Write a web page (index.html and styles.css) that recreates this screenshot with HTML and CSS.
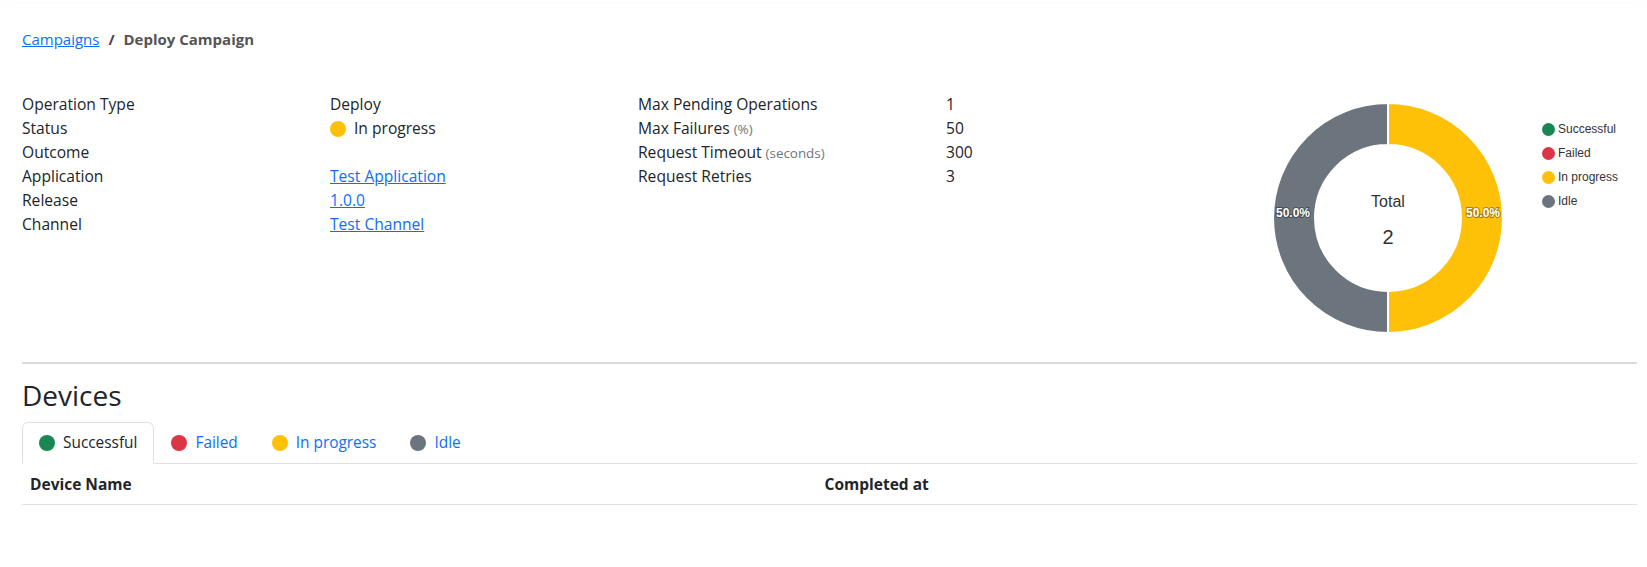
FILE: index.html
```html
<!DOCTYPE html>
<html>
<head>
  <title>Deploy Campaign</title>
  <link rel="stylesheet" href="styles.css">
</head>
<body>
  <div class="top-shadow"></div>

  <div class="content">
    <div class="breadcrumb">
      <a href="#">Campaigns</a>
      <span class="sep">/</span>
      <span class="current">Deploy Campaign</span>
    </div>

    <div class="overview">
      <table class="info">
        <tr><td class="label">Operation Type</td><td>Deploy</td></tr>
        <tr><td class="label">Status</td><td><span class="dot yellow"></span>In progress</td></tr>
        <tr><td class="label">Outcome</td><td></td></tr>
        <tr><td class="label">Application</td><td><a href="#">Test Application</a></td></tr>
        <tr><td class="label">Release</td><td><a href="#">1.0.0</a></td></tr>
        <tr><td class="label">Channel</td><td><a href="#">Test Channel</a></td></tr>
      </table>

      <table class="info">
        <tr><td class="label">Max Pending Operations</td><td>1</td></tr>
        <tr><td class="label">Max Failures <small>(%)</small></td><td>50</td></tr>
        <tr><td class="label">Request Timeout <small>(seconds)</small></td><td>300</td></tr>
        <tr><td class="label">Request Retries</td><td>3</td></tr>
      </table>

      <div class="chart">
        <svg class="donut" width="230" height="230" viewBox="0 0 230 230">
          <path d="M115 0 A115 115 0 0 1 115 230 L115 188 A73 73 0 0 0 115 42 Z" fill="#ffc107" stroke="#fff" stroke-width="2"/>
          <path d="M115 230 A115 115 0 0 1 115 0 L115 42 A73 73 0 0 0 115 188 Z" fill="#6c757d" stroke="#fff" stroke-width="2"/>
          <text class="pct" x="210" y="114">50.0%</text>
          <text class="pct" x="20" y="114">50.0%</text>
          <text class="total" x="115" y="104">Total</text>
          <text class="count" x="115" y="141">2</text>
        </svg>
        <ul class="legend">
          <li><span class="ldot green"></span>Successful</li>
          <li><span class="ldot red"></span>Failed</li>
          <li><span class="ldot yellow"></span>In progress</li>
          <li><span class="ldot gray"></span>Idle</li>
        </ul>
      </div>
    </div>

    <hr>

    <h2>Devices</h2>

    <ul class="tabs">
      <li class="active"><span class="dot green"></span>Successful</li>
      <li><span class="dot red"></span>Failed</li>
      <li><span class="dot yellow"></span>In progress</li>
      <li><span class="dot gray"></span>Idle</li>
    </ul>

    <table class="devices">
      <tr><th class="name">Device Name</th><th>Completed at</th></tr>
    </table>
  </div>
</body>
</html>
```

FILE: styles.css
```css
body {
  margin: 0;
  font-family: "Open Sans", sans-serif;
  color: #212529;
  background: #fff;
}

a {
  color: #0d6efd;
}

.top-shadow {
  height: 1px;
  box-shadow: 0 0 14px rgba(0, 0, 0, 0.14);
}

.content {
  padding: 26px 10px 0 22px;
}

.breadcrumb {
  font-size: 15px;
  line-height: 24px;
}

.breadcrumb .sep {
  margin: 0 5px;
  font-weight: bold;
  color: #444;
}

.breadcrumb .current {
  font-weight: bold;
  color: #555;
}

.overview {
  display: flex;
  margin-top: 41px;
}

.info {
  border-collapse: collapse;
  font-size: 15.6px;
  line-height: 24px;
  align-self: flex-start;
}

.info td {
  padding: 0;
  height: 24px;
  width: 308px;
  vertical-align: top;
}

.info small {
  font-size: 13.4px;
  line-height: 1;
  color: #6c757d;
}

.dot {
  display: inline-block;
  width: 16px;
  height: 16px;
  border-radius: 50%;
  vertical-align: -3px;
  margin-right: 8px;
}

.green { background: #198754; }
.red { background: #dc3545; }
.yellow { background: #ffc107; }
.gray { background: #6c757d; }

.chart {
  flex: 1;
  display: flex;
  padding-top: 11px;
  padding-left: 19px;
}

.donut text {
  font-family: "Liberation Sans", Arial, sans-serif;
  text-anchor: middle;
}

.donut .pct {
  font-size: 12px;
  font-weight: bold;
  fill: #fff;
  paint-order: stroke;
  stroke: rgba(0, 0, 0, 0.35);
  stroke-width: 2px;
}

.donut .total {
  font-size: 16px;
  fill: #333;
}

.donut .count {
  font-size: 20px;
  fill: #333;
}

.legend {
  list-style: none;
  margin: 14px 0 0 39px;
  padding: 0;
  font-family: "Liberation Sans", Arial, sans-serif;
  font-size: 12px;
  color: #333;
}

.legend li {
  height: 24px;
  display: flex;
  align-items: center;
}

.ldot {
  width: 13px;
  height: 13px;
  border-radius: 50%;
  margin-right: 3px;
}

hr {
  border: 0;
  border-top: 2px solid #dadada;
  margin: 29px 0 14px;
}

h2 {
  font-size: 28px;
  font-weight: 500;
  margin: 0 0 10px;
  line-height: 34px;
}

.tabs {
  list-style: none;
  margin: 0;
  padding: 0;
  display: flex;
  border-bottom: 1px solid #dee2e6;
  font-size: 15.4px;
}

.tabs li {
  padding: 8px 16px 9px;
  line-height: 23px;
  color: #0d6efd;
  border: 1px solid transparent;
  border-top-left-radius: 6px;
  border-top-right-radius: 6px;
  margin-bottom: -1px;
}

.tabs li.active {
  color: #212529;
  border-color: #dee2e6 #dee2e6 #fff;
  background: #fff;
}

.devices {
  width: 100%;
  border-collapse: collapse;
  font-size: 15.5px;
}

.devices th {
  text-align: left;
  padding: 9px 8px;
  line-height: 22px;
  border-bottom: 1px solid #dee2e6;
}

.devices th.name {
  width: 49.2%;
}
```
